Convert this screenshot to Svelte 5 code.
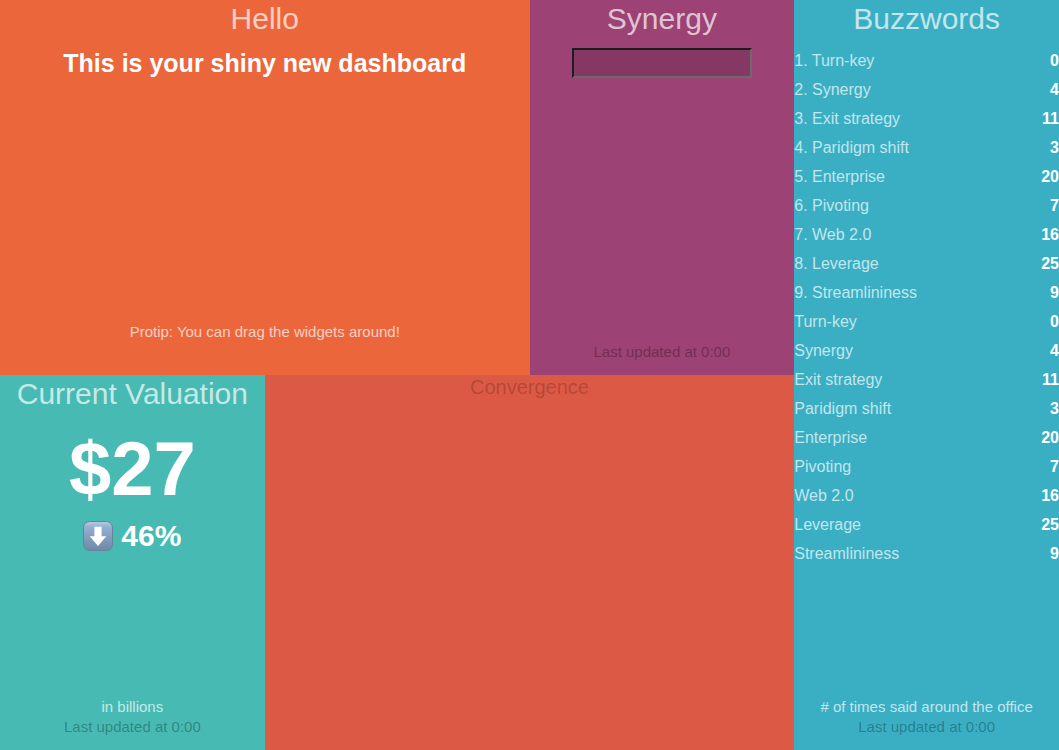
<script>
  const buzzwords = [
    { label: 'Turn-key', value: 0 },
    { label: 'Synergy', value: 4 },
    { label: 'Exit strategy', value: 11 },
    { label: 'Paridigm shift', value: 3 },
    { label: 'Enterprise', value: 20 },
    { label: 'Pivoting', value: 7 },
    { label: 'Web 2.0', value: 16 },
    { label: 'Leverage', value: 25 },
    { label: 'Streamlininess', value: 9 }
  ];

  let level = $state('');
</script>

<main class="board">
  <section class="widget hello">
    <h1>Hello</h1>
    <h3>This is your shiny new dashboard</h3>
    <footer class="raised">
      <p class="more">Protip: You can drag the widgets around!</p>
    </footer>
  </section>

  <section class="widget synergy">
    <h1 id="synergy-title">Synergy</h1>
    <input class="meter" type="text" aria-labelledby="synergy-title" bind:value={level} />
    <footer>
      <p class="updated">Last updated at 0:00</p>
    </footer>
  </section>

  <section class="widget buzz">
    <h1>Buzzwords</h1>
    <ol>
      {#each buzzwords as item, i}
        <li><span>{i + 1}. {item.label}</span><strong>{item.value}</strong></li>
      {/each}
    </ol>
    <ul>
      {#each buzzwords as item}
        <li><span>{item.label}</span><strong>{item.value}</strong></li>
      {/each}
    </ul>
    <footer>
      <p class="more"># of times said around the office</p>
      <p class="updated">Last updated at 0:00</p>
    </footer>
  </section>

  <section class="widget valuation">
    <h1>Current Valuation</h1>
    <h2>$27</h2>
    <p class="change">
      <svg viewBox="0 0 30 30" role="img" aria-label="down">
        <defs>
          <linearGradient id="key" x1="0" y1="0" x2="0" y2="1">
            <stop offset="0" stop-color="#b9cde2" />
            <stop offset="0.2" stop-color="#93aed0" />
            <stop offset="0.6" stop-color="#809bbb" />
            <stop offset="1" stop-color="#7088a8" />
          </linearGradient>
        </defs>
        <rect x="0.5" y="0.5" width="29" height="29" rx="6" fill="url(#key)" stroke="#67829f" />
        <path d="M11.4 5.800h7.200v9.400h4.700L15 24.900 6.700 15.200h4.700z" fill="#fff" />
      </svg>
      <span>46%</span>
    </p>
    <footer>
      <p class="more">in billions</p>
      <p class="updated">Last updated at 0:00</p>
    </footer>
  </section>

  <section class="widget convergence">
    <h1>Convergence</h1>
  </section>
</main>

<style>
  :global(body) {
    margin: 0;
    font-family: "Liberation Sans", Helvetica, Arial, sans-serif;
    color: #fff;
  }

  .board {
    display: grid;
    grid-template-columns: repeat(4, minmax(0, 1fr));
    grid-template-rows: repeat(2, minmax(50vh, auto));
  }

  .widget {
    box-sizing: border-box;
    display: flex;
    flex-direction: column;
    align-items: center;
    padding-bottom: 13px;
    text-align: center;
  }

  .hello { grid-column: span 2; background: #ec663c; }
  .synergy { background: #9c4274; }
  .buzz { grid-column: 4; grid-row: 1 / span 2; background: #3aafc4; }
  .valuation { background: #47bab3; }
  .convergence { grid-column: 2 / span 2; background: #dc5945; }

  h1, h2, h3, p, ol, ul { margin: 0; padding: 0; }

  h1 {
    margin-bottom: 10px;
    font-size: 30px;
    line-height: 38px;
    font-weight: 400;
    color: rgba(255, 255, 255, 0.7);
  }

  .convergence h1 {
    font-size: 20px;
    line-height: 24px;
    color: rgba(0, 0, 0, 0.2);
  }

  h3 { font-size: 25px; line-height: 30px; }

  h2 {
    margin-top: 4px;
    font-size: 76px;
    line-height: 84px;
  }

  .change {
    display: flex;
    align-items: center;
    gap: 8px;
    margin-top: 6px;
    font-size: 30px;
    line-height: 38px;
    font-weight: 700;
  }

  .change svg { width: 30px; height: 30px; }

  .meter {
    box-sizing: border-box;
    width: 68%;
    height: 30px;
    padding: 2px 4px;
    border: 2px solid;
    border-color: #1d1b1d #6b6b6b #6b6b6b #1d1b1d;
    border-radius: 0;
    background: #853863;
    color: rgba(255, 255, 255, 0.7);
    font: inherit;
    text-align: center;
    outline: none;
  }

  ol, ul {
    align-self: stretch;
    list-style: none;
    font-size: 16px;
    line-height: 29px;
  }

  ol { margin-top: -2px; }

  li {
    display: flex;
    justify-content: space-between;
  }

  li span { color: rgba(255, 255, 255, 0.7); }

  footer {
    margin-top: auto;
    font-size: 15px;
    line-height: 20px;
  }

  .raised { padding-bottom: 20px; }
  .more { color: rgba(255, 255, 255, 0.7); }
  .updated { color: rgba(0, 0, 0, 0.3); }
</style>
